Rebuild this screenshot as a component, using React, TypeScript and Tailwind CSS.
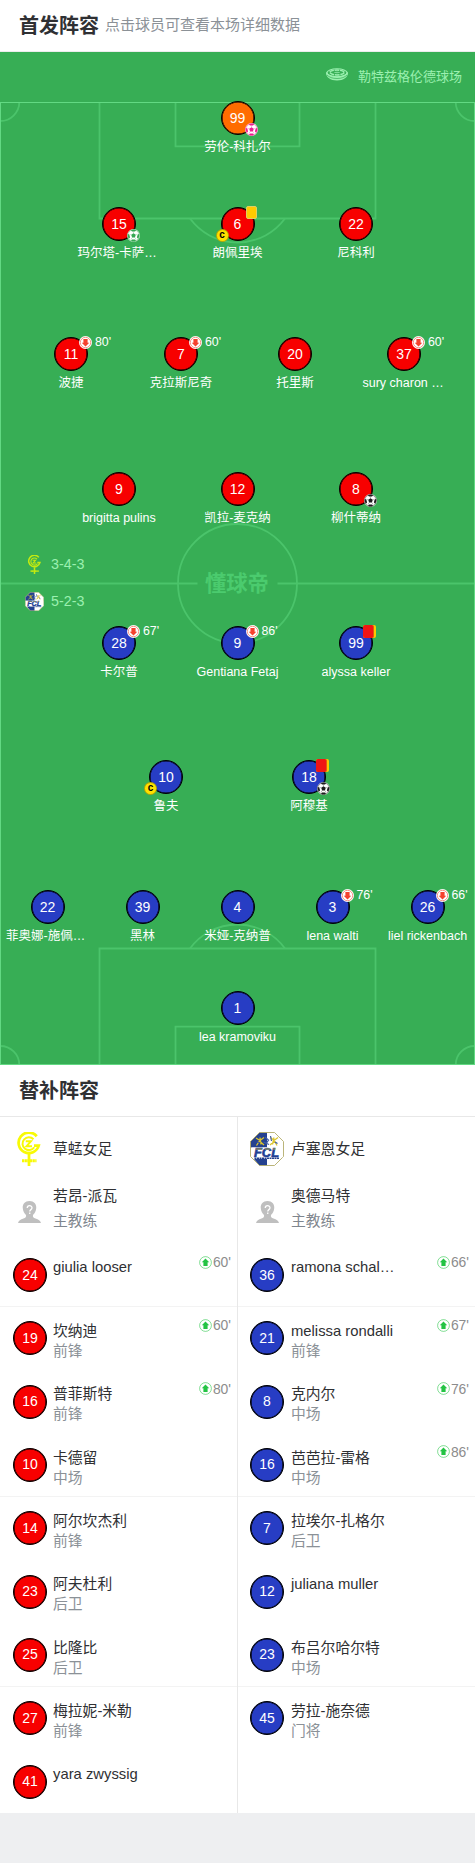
import React from 'react';
import clsx from 'clsx';

type Side = 'home' | 'away';

interface Player {
  number: number;
  name: string;
  keeper?: boolean;
  captain?: boolean;
  ball?: 'black' | 'pink' | 'green';
  card?: 'yellow' | 'red';
  off?: string;
}

interface Line {
  side: Side;
  className: string;
  players: Player[];
}

interface Sub {
  number: number;
  name: string;
  position?: string;
  on?: string;
}

const THREE = 'grid-cols-[119px_118px_119px]';

const HOME_LINES: Line[] = [
  { side: 'home', className: '-mt-px grid-cols-[119px]', players: [{ number: 99, name: '劳伦-科扎尔', keeper: true, ball: 'pink' }] },
  {
    side: 'home',
    className: clsx('mt-[51px]', THREE),
    players: [
      { number: 15, name: '玛尔塔-卡萨…', ball: 'green' },
      { number: 6, name: '朗佩里埃', captain: true, card: 'yellow' },
      { number: 22, name: '尼科利' },
    ],
  },
  {
    side: 'home',
    className: 'mt-[75px] pr-[5px] grid-cols-[110px_110px_118px_100px]',
    players: [
      { number: 11, name: '波捷', off: "80'" },
      { number: 7, name: '克拉斯尼奇', off: "60'" },
      { number: 20, name: '托里斯' },
      { number: 37, name: 'sury charon …', off: "60'" },
    ],
  },
  {
    side: 'home',
    className: clsx('mt-[80px]', THREE),
    players: [
      { number: 9, name: 'brigitta pulins' },
      { number: 12, name: '凯拉-麦克纳' },
      { number: 8, name: '柳什蒂纳', ball: 'black' },
    ],
  },
];

const AWAY_LINES: Line[] = [
  {
    side: 'away',
    className: THREE,
    players: [
      { number: 28, name: '卡尔普', off: "67'" },
      { number: 9, name: 'Gentiana Fetaj', off: "86'" },
      { number: 99, name: 'alyssa keller', card: 'red' },
    ],
  },
  {
    side: 'away',
    className: 'mt-[79px] grid-cols-[143px_143px]',
    players: [
      { number: 10, name: '鲁夫', captain: true },
      { number: 18, name: '阿穆基', card: 'red', ball: 'black' },
    ],
  },
  {
    side: 'away',
    className: 'mt-[75px] grid-cols-[95px_95px_95px_95px_95px]',
    players: [
      { number: 22, name: '菲奥娜-施佩…' },
      { number: 39, name: '黑林' },
      { number: 4, name: '米娅-克纳普' },
      { number: 3, name: 'lena walti', off: "76'" },
      { number: 26, name: 'liel rickenbach', off: "66'" },
    ],
  },
  { side: 'away', className: 'mt-[46px] grid-cols-[119px]', players: [{ number: 1, name: 'lea kramoviku' }] },
];

const HOME_SUBS: Sub[] = [
  { number: 24, name: 'giulia looser', on: "60'" },
  { number: 19, name: '坎纳迪', position: '前锋', on: "60'" },
  { number: 16, name: '普菲斯特', position: '前锋', on: "80'" },
  { number: 10, name: '卡德留', position: '中场' },
  { number: 14, name: '阿尔坎杰利', position: '前锋' },
  { number: 23, name: '阿夫杜利', position: '后卫' },
  { number: 25, name: '比隆比', position: '后卫' },
  { number: 27, name: '梅拉妮-米勒', position: '前锋' },
  { number: 41, name: 'yara zwyssig' },
];

const AWAY_SUBS: Sub[] = [
  { number: 36, name: 'ramona schal…', on: "66'" },
  { number: 21, name: 'melissa rondalli', position: '前锋', on: "67'" },
  { number: 8, name: '克内尔', position: '中场', on: "76'" },
  { number: 16, name: '芭芭拉-雷格', position: '中场', on: "86'" },
  { number: 7, name: '拉埃尔-扎格尔', position: '后卫' },
  { number: 12, name: 'juliana muller' },
  { number: 23, name: '布吕尔哈尔特', position: '中场' },
  { number: 45, name: '劳拉-施奈德', position: '门将' },
];

const BALL_COLORS = { black: '#1c1c1c', pink: '#ec1c8f', green: '#35a853' };

const BallIcon: React.FC<{ color: string; className?: string }> = ({ color, className }) => (
  <svg viewBox="0 0 26 26" className={className}>
    <circle cx="13" cy="13" r="12.8" fill="#fff" />
    <circle cx="13" cy="13" r="11.6" fill="none" stroke={color} strokeOpacity=".8" strokeWidth="1.2" />
    <g fill={color}>
      <path d="M13 8.500l4.500 3.200-1.700 5.300h-5.600l-1.700-5.300z" />
      <path d="M7.500 2.200A12 12 0 0 1 18.500 2.200L16 5h-6z" />
      <path d="M24.500 9.500a12 12 0 0 1-2 10L19.800 17l1.400-5.500z" />
      <path d="M1.500 9.500a12 12 0 0 0 2 10L6.200 17l-1.400-5.500z" />
      <path d="M8 23.800a12 12 0 0 0 10 0L16.200 21h-6.400z" />
    </g>
    <path
      d="M13 8.500V5M17.500 11.700l3.700-1.200M15.800 17l2.200 3.500M10.200 17L8 20.500M8.500 11.700l-3.700-1.200"
      stroke={color}
      strokeWidth="1"
      strokeOpacity=".6"
    />
  </svg>
);

const ArrowIcon: React.FC<{ direction: 'up' | 'down'; className?: string }> = ({ direction, className }) => {
  const color = direction === 'up' ? '#23c343' : '#f5412d';
  return (
    <svg viewBox="0 0 26 26" className={className}>
      <circle cx="13" cy="13" r="13" fill="#fff" />
      <circle cx="13" cy="13" r={direction === 'up' ? 11.8 : 10.4} fill="none" stroke={color} strokeOpacity=".8" strokeWidth="1.4" />
      <path
        d="M13 21l-7.500-7.500h3.300V6h8.400v7.500h3.300z"
        fill={color}
        transform={direction === 'up' ? 'rotate(180 13 13)' : undefined}
      />
    </svg>
  );
};

const StadiumIcon: React.FC<{ className?: string }> = ({ className }) => (
  <svg viewBox="0 0 44 26" className={className}>
    <path d="M0 10c0 8 9 15 22 15s22-7 22-15l-1-3c-2 6-10 10-21 10S3 13 1 7z" fill="#9bf0b0" />
    <ellipse cx="22" cy="9.500" rx="20" ry="8" fill="none" stroke="#9bf0b0" strokeWidth="2.200" />
    <ellipse cx="22" cy="9" rx="14" ry="4.800" fill="none" stroke="#9bf0b0" strokeWidth="3" strokeDasharray="9 1.500" />
    <ellipse cx="22" cy="9" rx="6" ry="1.500" fill="#7fdc98" />
    <path d="M2 14c4 4.500 11 7 20 7s16-2.500 20-7" fill="none" stroke="#35ae55" strokeWidth="1.400" />
  </svg>
);

const HomeCrest: React.FC<{ color: string; className?: string }> = ({ color, className }) => (
  <svg viewBox="0 0 48 68" className={className} fill="none" stroke={color}>
    <path d="M39.500 8.500A20.500 20.500 0 1 0 43.500 27H34" strokeWidth="5.500" />
    <path d="M33 14.500A12.800 12.800 0 1 0 34.500 30.500" strokeWidth="4" />
    <path d="M17.500 18.500H28L19 28.500h11" strokeWidth="3.800" />
    <path d="M24 44v24" strokeWidth="5.500" />
    <path d="M10 57.500h29" strokeWidth="6" strokeDasharray="4.500 .8" />
  </svg>
);

const AwayCrest: React.FC<{ className?: string }> = ({ className }) => (
  <svg viewBox="0 0 68 68" className={className}>
    <path d="M19 1h30l18 18v30L49 67H19L1 49V19z" fill="#fff" />
    <path d="M19 1h15v30H1V19z" fill="#24418f" />
    <path d="M8 54h26v13H19z" fill="#24418f" />
    <path d="M19 1h30l18 18v30L49 67H19L1 49V19z" fill="none" stroke="#b3ad6b" strokeWidth="1.800" />
    <g fill="none" stroke="#dcc62e" strokeWidth="2.600">
      <path d="M12 12l8 5 8-6M13 27l6-9 9 8M20 11l2 14" />
      <path d="M56 11l-8 6-7-6M54 27l-5-9-9 8M48 11l-3 14" />
    </g>
    <path d="M30 10l7 6-5 8M27 20l11 5M41 8l2 10M50 20l5 3M14 20l5 2" stroke="#3d5ba5" strokeWidth="2.400" fill="none" />
    <path d="M3 31h62v20H5z" fill="#fff" />
    <text
      x="33"
      y="49"
      textAnchor="middle"
      textLength="50"
      lengthAdjust="spacingAndGlyphs"
      fontSize="24"
      fontWeight="900"
      fontStyle="italic"
      fill="#1f3f94"
      stroke="#1f3f94"
      strokeWidth="1.200"
    >
      FCL
    </text>
    <path d="M12 34h12M30 34h10M46 34h6" stroke="#dcc62e" strokeWidth="1.500" />
    <path d="M9 52.500h50" stroke="#24418f" strokeWidth="2.600" strokeDasharray="4 1" />
  </svg>
);

const CoachAvatar: React.FC = () => (
  <svg viewBox="0 0 46 44" className="h-[22px] w-[23px]">
    <path
      d="M23 0c9 0 14 6 13.500 14-.4 7-3.500 11-6.500 14-1 4 1 5.500 5 7 6 2 10 4 11 9H0c1-5 5-7 11-9 4-1.500 6-3 5-7-3-3-6.100-7-6.500-14C9 6 14 0 23 0z"
      fill="#bfbfbf"
    />
    <path d="M18.500 14c0-6 9.500-6 9.500-.5 0 4-4.500 3.500-4.500 7.500M23.500 23v3" fill="none" stroke="#fff" strokeWidth="2.600" />
  </svg>
);

const Shirt: React.FC<{ side: Side; number: number; keeper?: boolean }> = ({ side, number, keeper }) => (
  <div
    className={clsx(
      'flex size-[34px] shrink-0 items-center justify-center rounded-full border border-black text-[14px] text-white shadow-[inset_0_0_0_0.6px_#000]',
      keeper ? 'bg-[#ff6c00]' : side === 'home' ? 'bg-[#f70000]' : 'bg-[#273dc4]',
    )}
  >
    {number}
  </div>
);

const PitchPlayer: React.FC<{ side: Side; player: Player }> = ({ side, player }) => (
  <div className="flex h-[55px] flex-col items-center">
    <div className="relative">
      <Shirt side={side} number={player.number} keeper={player.keeper} />
      {player.ball && <BallIcon color={BALL_COLORS[player.ball]} className="absolute top-[22px] left-[24.5px] size-[13px]" />}
      {player.captain && (
        <span className="absolute top-[22px] -left-[5px] flex size-[13px] items-center justify-center rounded-full border border-[#8b8000]/60 bg-[#ffe100] pb-px text-[10px] leading-none font-bold text-black">
          c
        </span>
      )}
      {player.card === 'yellow' && (
        <span className="absolute -top-px left-[25px] h-[13px] w-[11px] rounded-[2px] border border-[#e0d060] bg-[#ffcb00]" />
      )}
      {player.card === 'red' && (
        <span className="absolute -top-px left-[24px] h-[13px] w-[13px] rounded-[2px] bg-[#ffc600]">
          <span className="block h-[13px] w-[11px] rounded-[2px] border-r border-[#e05a10] bg-[#f01414]" />
        </span>
      )}
      {player.off && (
        <div className="absolute -top-px left-[25px] flex items-center gap-[3px] text-[12.35px] leading-[13px] text-white">
          <ArrowIcon direction="down" className="size-[13px]" />
          <span className="-mt-px">{player.off}</span>
        </div>
      )}
    </div>
    <div
      className={clsx(
        'mt-[2px] w-[83px] text-[12.5px] leading-5 whitespace-nowrap text-white',
        !player.name.endsWith('…') && 'text-center',
      )}
    >
      {player.name}
    </div>
  </div>
);

const PitchLine: React.FC<{ line: Line }> = ({ line }) => (
  <div className={clsx('grid justify-center', line.className)}>
    {line.players.map((player) => (
      <PitchPlayer key={player.name} side={line.side} player={player} />
    ))}
  </div>
);

const PitchMarkings: React.FC = () => (
  <svg viewBox="0 0 475 963" className="absolute top-[50px] left-0 h-[963px] w-[475px]" fill="none" stroke="#4bc46b" strokeWidth="1.8">
    <path d="M99.500 0v116.500h276V0M175.500 0v44.300h124V0" />
    <path d="M190 116.500a59 59 0 0 0 95 0" />
    <path d="M19.300 0A19 19 0 0 1 0 19M455.700 0A19 19 0 0 0 475 19" />
    <path d="M0 481.500h197.500M277.500 481.500H475" />
    <circle cx="237.500" cy="481.500" r="59.500" />
    <path d="M99.500 963V846.500h276V963M175.500 963v-38.300h124V963" />
    <path d="M190 846.500a59 59 0 0 1 95 0" />
    <path d="M19.300 963A19 19 0 0 0 0 944M455.700 963A19 19 0 0 1 475 944" />
    <rect x=".5" y=".5" width="474" height="962" stroke="#62d983" strokeWidth="1" />
  </svg>
);

const Pitch: React.FC = () => (
  <section className="relative h-[1013px] bg-[#37ae55]">
    <PitchMarkings />
    <div className="relative">
      <div className="flex h-[50px] items-center justify-end pr-[13px] text-[13px] text-[#9bf0b0]">
        <StadiumIcon className="mr-[10px] mb-[6px] h-[13px] w-[22px]" />
        <span>勒特兹格伦德球场</span>
      </div>
      {HOME_LINES.map((line, i) => (
        <PitchLine key={i} line={line} />
      ))}
      <div className="grid h-[99px] grid-cols-[205px_65px] text-[#9bf0b0]">
        <div className="flex flex-col gap-[18px] pt-[28px] pl-[25px] text-[14.3px] leading-[19px]">
          <div className="flex items-center gap-[7px]">
            <HomeCrest color="#c3ea10" className="size-[19px]" />
            <span>3-4-3</span>
          </div>
          <div className="flex items-center gap-[7px]">
            <AwayCrest className="size-[19px]" />
            <span>5-2-3</span>
          </div>
        </div>
        <div className="pt-[42px] text-[21.3px] leading-[30px] font-bold whitespace-nowrap text-[#4bcb6e]">懂球帝</div>
      </div>
      {AWAY_LINES.map((line, i) => (
        <PitchLine key={i} line={line} />
      ))}
    </div>
  </section>
);

const SubRow: React.FC<{ side: Side; sub: Sub; divided: boolean }> = ({ side, sub, divided }) => (
  <div className={clsx('flex h-[63.33px] border-t', divided ? 'border-[#f3f3f3]' : 'border-transparent', side === 'home' ? 'pl-[13px]' : 'pl-[12px]')}>
    <div className="pt-[14px]">
      <Shirt side={side} number={sub.number} />
    </div>
    <div className={clsx('min-w-0 flex-1 text-[14.8px] leading-5', sub.position ? 'pt-[13.6px]' : 'pt-[13px]', side === 'home' ? 'pl-[6px]' : 'pl-[7px]')}>
      <p className="whitespace-nowrap text-[#2f3033]">{sub.name}</p>
      {sub.position && <p className="text-[#8b9197]">{sub.position}</p>}
    </div>
    {sub.on && (
      <div className="mt-[11.5px] mr-[6px] flex h-[13px] items-center gap-px text-[13.9px] leading-[13px] text-[#8c8c8c]">
        <ArrowIcon direction="up" className="size-[13px]" />
        <span className="mt-px">{sub.on}</span>
      </div>
    )}
  </div>
);

interface BenchProps {
  side: Side;
  team: string;
  coach: string;
  crest: React.ReactNode;
  subs: Sub[];
}

const Bench: React.FC<BenchProps> = ({ side, team, coach, crest, subs }) => (
  <div className={clsx('text-[14.8px] text-[#2f3033]', side === 'home' && 'border-r border-[#e8e8e8]')}>
    <div className="flex h-[63px] items-center pl-[12px]">
      <div className="flex w-[34px] justify-center">{crest}</div>
      <span className="pt-[2px] pl-[7px]">{team}</span>
    </div>
    <div className="flex h-[63px] pl-[12px]">
      <div className="flex w-[34px] justify-center pt-[21px]">
        <CoachAvatar />
      </div>
      <div className="pl-[7px] leading-[25px]">
        <p className="pt-[4px]">{coach}</p>
        <p className="text-[#7f868e]">主教练</p>
      </div>
    </div>
    {subs.map((sub, i) => (
      <SubRow key={sub.number} side={side} sub={sub} divided={i % 3 === 1} />
    ))}
  </div>
);

const App: React.FC = () => {
  return (
    <div className="min-h-[1863px] w-[475px] overflow-hidden bg-[#eeeff1] font-['Liberation_Sans','Noto_Sans_CJK_SC',sans-serif]">
      <header className="flex h-[52px] items-center gap-[6px] border-b border-[#ececec] bg-white pl-[19px]">
        <h1 className="text-[20px] font-bold text-[#2f3033]">首发阵容</h1>
        <p className="text-[15px] text-[#8b9197]">点击球员可查看本场详细数据</p>
      </header>
      <Pitch />
      <div className="flex h-[52px] items-center border-b border-[#e8e8e8] bg-white pl-[19px]">
        <h2 className="text-[20px] font-bold text-[#2f3033]">替补阵容</h2>
      </div>
      <div className="grid grid-cols-[238px_237px] bg-white">
        <Bench side="home" team="草蜢女足" coach="若昂-派瓦" subs={HOME_SUBS} crest={<HomeCrest color="#f8fa05" className="h-[34px] w-[24px]" />} />
        <Bench side="away" team="卢塞恩女足" coach="奥德马特" subs={AWAY_SUBS} crest={<AwayCrest className="size-[34px]" />} />
      </div>
    </div>
  );
};

export default App;
